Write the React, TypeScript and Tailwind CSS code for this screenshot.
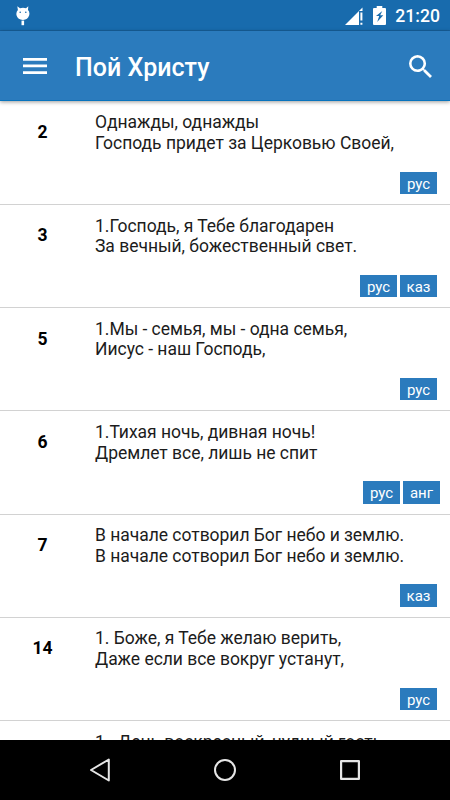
import React from 'react';

interface Song {
  number?: string;
  lines: string[];
  langs: string[];
  tagsClass?: string;
}

const songs: Song[] = [
  { number: '2', lines: ['Однажды, однажды', 'Господь придет за Церковью Своей,'], langs: ['рус'] },
  { number: '3', lines: ['1.Господь, я Тебе благодарен', 'За вечный, божественный свет.'], langs: ['рус', 'каз'] },
  { number: '5', lines: ['1.Мы - семья, мы - одна семья,', 'Иисус - наш Господь,'], langs: ['рус'] },
  { number: '6', lines: ['1.Тихая ночь, дивная ночь!', 'Дремлет все, лишь не спит'], langs: ['рус', 'анг'], tagsClass: 'pr-[10px]' },
  { number: '7', lines: ['В начале сотворил Бог небо и землю.', 'В начале сотворил Бог небо и землю.'], langs: ['каз'] },
  { number: '14', lines: ['1. Боже, я Тебе желаю верить,', 'Даже если все вокруг устанут,'], langs: ['рус'] },
  { lines: ['1.\u00a0 День воскресный, чудный гость'], langs: [] },
];

const StatusBar: React.FC = () => (
  <div className="flex h-[31px] shrink-0 items-center border-b border-[#17609c] bg-[#186bad] pr-[10px] pl-4 text-white">
    <svg width="14" height="20" viewBox="0 0 14 20" fill="currentColor" className="mt-px">
      <path d="M1.3 0.3 4 2.3Q7 1.3 10 2.3L12.3 0.3 12 4Q14 6 13.2 9.3Q11.8 13.8 7 13.9Q1.8 13.8 0.5 9.3Q-0.1 6 1.9 4Z" />
      <path d="M5.5 14.6h2.6v4.6h-2.6z" />
      <circle cx="4.2" cy="6.2" r="0.8" fill="#186bad" />
      <circle cx="9.8" cy="6.2" r="0.8" fill="#186bad" />
    </svg>
    <div className="ml-auto flex items-center">
      <svg width="18" height="18" viewBox="0 0 18 18" fill="currentColor" className="mt-px">
        <path d="M0 18 17.5 0.5V4H14v14Z" />
        <path d="M15.4 5.5h2v8h-2zM15.4 15.7h2v2.1h-2z" />
      </svg>
      <svg width="13" height="19" viewBox="0 0 13 19" fill="currentColor" className="ml-[10px]">
        <path d="M3.7 0h5.6v2H12a1 1 0 0 1 1 1v15a1 1 0 0 1-1 1H1a1 1 0 0 1-1-1V3a1 1 0 0 1 1-1h2.7Z" />
        <path d="M9.3 5 3 10h3.2l-2 6L10.3 9.2H7.2Z" fill="#186bad" />
      </svg>
      <span className="mt-[2px] ml-[9px] text-[17.6px] leading-[20px] font-medium">21:20</span>
    </div>
  </div>
);

const Toolbar: React.FC = () => (
  <header className="relative z-10 flex h-[70px] shrink-0 items-center border-b border-[#0873bd] bg-[#2b7bbd] pr-[18px] pl-[23px] text-white shadow-[0_1px_4px_rgba(0,0,0,0.4)]">
    <svg width="24" height="16" viewBox="0 0 24 16" fill="currentColor">
      <path d="M0 0h24v2.7H0zM0 6.6h24v2.7H0zM0 13.2h24v2.7H0z" />
    </svg>
    <h1 className="mt-[5px] ml-[28px] text-[25px] leading-[32px] font-medium">Пой Христу</h1>
    <svg width="23" height="23" viewBox="3 3 17.5 17.5" fill="currentColor" className="mt-px ml-auto">
      <path d="M15.5 14h-.79l-.28-.27A6.471 6.471 0 0 0 16 9.5 6.5 6.5 0 1 0 9.5 16c1.61 0 3.09-.59 4.23-1.57l.27.28v.79l5 4.99L20.49 19l-4.99-5zm-6 0C7.01 14 5 11.99 5 9.5S7.01 5 9.5 5 14 7.01 14 9.5 11.99 14 9.5 14z" />
    </svg>
  </header>
);

const SongRow: React.FC<{ song: Song }> = ({ song }) => (
  <li className="flex h-[103.2px] shrink-0 border-b border-[#d2d2d2] pt-[10.6px]">
    <div className="w-[85px] shrink-0 pt-[8.7px] text-center text-[17.5px] leading-[22px] font-bold">
      {song.number}
    </div>
    <div className="flex flex-1 flex-col pl-[10px]">
      <div className="text-[17.5px] leading-[20.6px] tracking-[-0.03px] whitespace-nowrap text-[#1c1c1c]">
        {song.lines.map((line, i) => (
          <p key={i}>{line}</p>
        ))}
      </div>
      <div className={`mt-auto mb-[10px] flex justify-end gap-[3px] ${song.tagsClass || 'pr-[13px]'}`}>
        {song.langs.map((lang) => (
          <span key={lang} className="h-[22.4px] w-[37px] bg-[#2b7bbd] pt-px text-center text-[15px] leading-[22px] text-white">
            {lang}
          </span>
        ))}
      </div>
    </div>
  </li>
);

const NavigationBar: React.FC = () => (
  <nav className="flex h-[60px] shrink-0 items-center justify-between bg-black pr-[90px] pl-[89px] text-[#e6e6e6]">
    <svg width="22" height="24" viewBox="0 0 22 24" fill="none" stroke="currentColor" strokeWidth="2" strokeLinejoin="round">
      <path d="M19.8 1.5v21L2 12Z" />
    </svg>
    <svg width="24" height="24" viewBox="0 0 24 24" fill="none" stroke="currentColor" strokeWidth="2" className="mr-[2px]">
      <circle cx="12" cy="12" r="10" />
    </svg>
    <svg width="20" height="20" viewBox="0 0 20 20" fill="none" stroke="currentColor" strokeWidth="2.2" strokeLinejoin="round">
      <path d="M1.1 1.1h17.8v17.8H1.1Z" />
    </svg>
  </nav>
);

export default function App() {
  return (
    <div className="flex h-[800px] w-[450px] flex-col overflow-hidden bg-white font-['Roboto',sans-serif] text-black">
      <StatusBar />
      <Toolbar />
      <ul className="flex min-h-0 flex-1 flex-col overflow-hidden pt-[0.9px]">
        {songs.map((song, i) => (
          <SongRow key={i} song={song} />
        ))}
      </ul>
      <NavigationBar />
    </div>
  );
}
